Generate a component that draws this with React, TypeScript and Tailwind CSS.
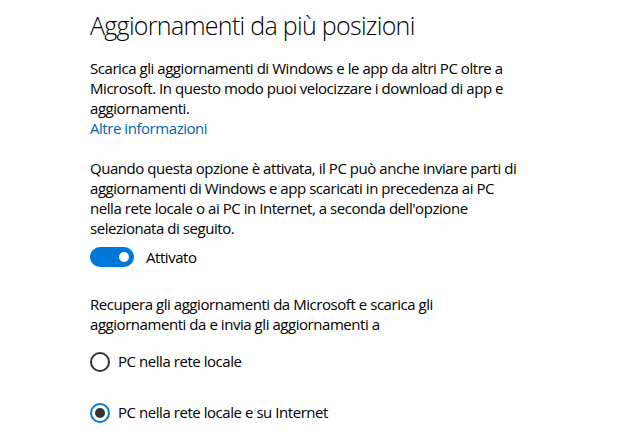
import React from "react";

const lines = (arr: string[]) =>
  arr.map((l, i) => (
    <span key={i} className="block whitespace-nowrap">
      {l}
    </span>
  ));

export default function App() {
  return (
    <div
      className="w-[630px] h-[438px] bg-white overflow-hidden pl-[90px] text-black"
      style={{ fontFamily: '"Segoe UI", "Open Sans", "Noto Sans", sans-serif' }}
    >
      <h1 className="text-[25px] leading-[32px] font-light pt-[9px] tracking-[-0.7px]">
        Aggiornamenti da più posizioni
      </h1>
      <div className="mt-[17px] text-[15px] leading-[20px] tracking-[-0.45px]">
        {lines([
          "Scarica gli aggiornamenti di Windows e le app da altri PC oltre a",
          "Microsoft. In questo modo puoi velocizzare i download di app e",
          "aggiornamenti.",
        ])}
        <span className="block text-[#0063b1]">Altre informazioni</span>
      </div>
      <div className="mt-[20px] text-[15px] leading-[20px] tracking-[-0.45px]">
        {lines([
          "Quando questa opzione è attivata, il PC può anche inviare parti di",
          "aggiornamenti di Windows e app scaricati in precedenza ai PC",
          "nella rete locale o ai PC in Internet, a seconda dell'opzione",
          "selezionata di seguito.",
        ])}
      </div>
      <div className="mt-[8px] flex items-center gap-[12px] text-[15px] tracking-[-0.45px]">
        <div className="w-[44px] h-[20px] rounded-full bg-[#0078d7] flex items-center justify-end pr-[5px]">
          <div className="w-[10px] h-[10px] rounded-full bg-white" />
        </div>
        <span>Attivato</span>
      </div>
      <div className="mt-[25px] text-[15px] leading-[20px] tracking-[-0.45px]">
        {lines([
          "Recupera gli aggiornamenti da Microsoft e scarica gli",
          "aggiornamenti da e invia gli aggiornamenti a",
        ])}
      </div>
      <div className="mt-[18px] flex flex-col gap-[31px] text-[15px] tracking-[-0.45px]">
        <div className="flex items-center gap-[8px] h-[20px]">
          <div className="w-[20px] h-[20px] rounded-full border-2 border-[#333333]" />
          <span>PC nella rete locale</span>
        </div>
        <div className="flex items-center gap-[8px] h-[20px]">
          <div className="w-[20px] h-[20px] rounded-full border-2 border-[#0078d7] flex items-center justify-center">
            <div className="w-[10px] h-[10px] rounded-full bg-[#333333]" />
          </div>
          <span>PC nella rete locale e su Internet</span>
        </div>
      </div>
    </div>
  );
}
